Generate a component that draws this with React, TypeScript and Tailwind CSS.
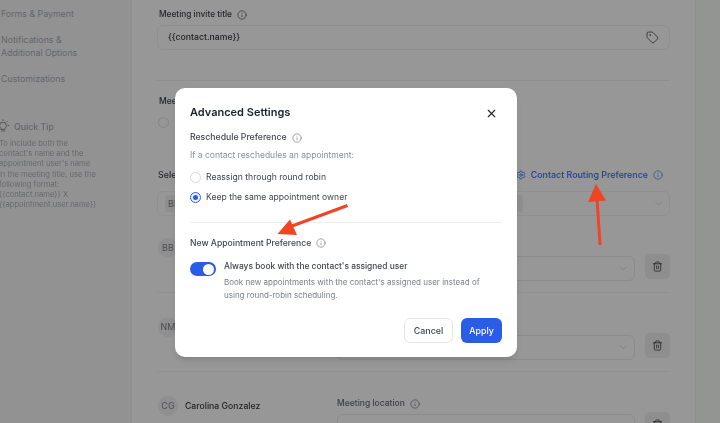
import React from "react";
import { Info, Tag, Settings, ChevronDown, Trash2, X } from "lucide-react";

function Row({ initials, name, label }: { initials: string; name?: string; label?: string }) {
  return (
    <div className="h-[79px] flex border-b border-[#909090] pt-[24px] shrink-0">
      <div className="w-[180px] pl-[1px] flex items-start gap-[7px]">
        <div className="w-[20px] h-[20px] rounded-full bg-[#8f8f90] flex items-center justify-center text-[9px] text-[#4b4d52] shrink-0">
          {initials}
        </div>
        {name && <span className="text-[8.7px] leading-[21px] text-[#1e1f22] font-medium">{name}</span>}
      </div>
      <div className="flex-1 flex flex-col pt-[1px]">
        <div className="h-[13px] shrink-0 flex items-center gap-[5px] text-[8.5px] font-medium text-[#3d3f44]">
          {label}
          {label && <Info size={10} strokeWidth={1.5} />}
        </div>
        <div className="mt-[4px] h-[25px] shrink-0 flex items-center justify-end pr-[5px] border border-[#8b8b8b] rounded-[6px] w-[298px]">
          <ChevronDown size={11} className="text-[#797979]" strokeWidth={1.5} />
        </div>
      </div>
      <div className="w-[25px] h-[25px] mt-[16px] ml-[10px] rounded-[5px] bg-[#8e8e8e] flex items-center justify-center">
        <Trash2 size={11} strokeWidth={1.75} className="text-[#25262a]" />
      </div>
    </div>
  );
}

export default function App() {
  return (
    <div className="w-[720px] h-[423px] overflow-hidden bg-[#939393]">
      <div className="relative w-[720px] h-[423px] flex blur-[0.4px] font-['Inter','Liberation_Sans',sans-serif]">
        {/* Sidebar */}
        <aside className="w-[132px] shrink-0 bg-[#929292] border-r border-[#8e8e8e] text-[#64666b] text-[8.8px] leading-[13px] pl-[1px] pt-[7px]">
          <p>Forms &amp; Payment</p>
          <p className="mt-[13px]">
            Notifications &amp;
            <br />
            Additional Options
          </p>
          <p className="mt-[13px]">Customizations</p>
          <div className="mt-[34px] -ml-[5px] flex items-center gap-[4px] text-[8.8px] font-medium">
            <svg width="14" height="14" viewBox="0 0 14 14" fill="none" stroke="#55575b" strokeWidth="1" strokeLinecap="round">
              <path d="M5 9.2C4 8.5 3.6 7.6 3.6 6.6a3.4 3.4 0 0 1 6.8 0c0 1-.4 1.9-1.4 2.6v1.2H5z" />
              <path d="M5.6 12h2.8" />
              <path d="M7 .6v1M1.2 6.6h1M11.8 6.6h1M2.8 2.4l.7.7M11.2 2.4l-.7.7" />
            </svg>
            <span>Quick Tip</span>
          </div>
          <p className="mt-[6px] -ml-[2px] text-[7.6px] leading-[10.2px] text-[#66686d] whitespace-nowrap">
            To include both the
            <br />
            contact's name and the
            <br />
            appointment user's name
            <br />
            in the meeting title, use the
            <br />
            following format:
            <br />
            {"{{contact.name}} X"}
            <br />
            {"{{appointment.user.name}}"}
          </p>
        </aside>

        {/* Main panel */}
        <main className="w-[564px] shrink-0 bg-[#979797] border-r border-[#8f8f8f] px-[25px] pt-[8px] flex flex-col">
          <div className="ml-[2px] h-[13px] shrink-0 flex items-center gap-[5px] text-[8.3px] font-medium text-[#26272b]">
            Meeting invite title <Info size={10} strokeWidth={1.5} />
          </div>
          <div className="mt-[4px] h-[25px] shrink-0 border border-[#8f8f8f] rounded-[6px] flex items-center justify-between pl-[10px] pr-[10px] text-[8.7px] text-[#1e1f22] font-medium">
            {"{{contact.name}}"}
            <Tag size={13} strokeWidth={1.5} className="text-[#2a2b2f]" />
          </div>
          <div className="mt-[30px] shrink-0 border-t border-[#8f8f8f]" />
          <div className="mt-[14px] ml-[2px] h-[13px] shrink-0 text-[8.5px] font-medium text-[#26272b]">Meeting</div>
          <div className="mt-[9px] ml-[1px] w-[11px] h-[11px] shrink-0 rounded-full border border-[#858585]" />
          <div className="mt-[40px] h-[14px] shrink-0 flex items-center justify-between text-[8.9px] font-medium">
            <span className="text-[#26272b] ml-[1px]">Select</span>
            <span className="flex items-center gap-[5px] text-[#1f3d9c] pr-[7px]">
              <Settings size={10} strokeWidth={1.75} />
              <span>Contact Routing Preference</span>
              <Info size={10} strokeWidth={1.5} />
            </span>
          </div>
          <div className="mt-[9px] h-[25px] shrink-0 border border-[#8f8f8f] rounded-[6px] flex items-center justify-between pl-[7px] pr-[5px]">
            <span className="h-[17px] w-[358px] bg-[#8f8f8f] rounded-[3px] text-[9px] pl-[3px] text-[#4b4d52] flex items-center">
              BB
            </span>
            <ChevronDown size={11} className="text-[#797979]" strokeWidth={1.5} />
          </div>
          <div className="mt-[-2px] shrink-0 flex flex-col">
            <Row initials="BB" />
            <Row initials="NM" />
            <Row initials="CG" name="Carolina Gonzalez" label="Meeting location" />
          </div>
        </main>

        {/* Right strip */}
        <div className="flex-1 bg-[#939593]" />

        {/* Modal */}
        <div className="absolute left-[175px] top-[88px] w-[342px] h-[269px] bg-white rounded-[10px] shadow-md px-[15px] pt-[16px] flex flex-col text-[#40444d]">
          <div className="flex items-center justify-between h-[16px] shrink-0">
            <h2 className="text-[11px] leading-[16px] font-semibold text-[#1a1f2b]">Advanced Settings</h2>
            <X size={13} strokeWidth={2} className="text-[#1f2430] mr-[4px] mt-[2px]" />
          </div>
          <div className="mt-[11px] h-[14px] shrink-0 flex items-center gap-[5px] text-[8.7px] font-medium">
            Reschedule Preference <Info size={10} strokeWidth={1.5} className="text-[#676b75]" />
          </div>
          <p className="mt-[4px] text-[8.5px] leading-[13px] text-[#8a8f9c]">If a contact reschedules an appointment:</p>
          <div className="mt-[8px] h-[14px] shrink-0 flex items-center gap-[5px] text-[8.6px]">
            <span className="w-[11px] h-[11px] rounded-full border border-[#d5d7dc]" />
            Reassign through round robin
          </div>
          <div className="mt-[6px] h-[14px] shrink-0 flex items-center gap-[5px] text-[8.6px]">
            <span className="w-[11px] h-[11px] rounded-full border border-[#2b5ce6] bg-[#eef2fe] flex items-center justify-center">
              <span className="w-[5px] h-[5px] rounded-full bg-[#2b5ce6]" />
            </span>
            Keep the same appointment owner
          </div>
          <div className="mt-[18px] shrink-0 border-t border-[#eceef1]" />
          <div className="mt-[13px] h-[14px] shrink-0 flex items-center gap-[5px] text-[8.6px] font-medium">
            New Appointment Preference <Info size={10} strokeWidth={1.5} className="text-[#676b75]" />
          </div>
          <div className="mt-[10px] flex gap-[8px] shrink-0">
            <div className="mt-[2px] w-[26px] h-[14px] rounded-full bg-[#2b5ce6] flex items-center justify-end pr-[2px] shrink-0">
              <span className="w-[11px] h-[11px] rounded-full bg-white" />
            </div>
            <div>
              <p className="text-[8.4px] leading-[13px] font-medium">Always book with the contact's assigned user</p>
              <p className="mt-[3px] text-[8px] leading-[13px] text-[#787d8a]">
                Book new appointments with the contact's assigned user instead of
                <br />
                using round-robin scheduling.
              </p>
            </div>
          </div>
          <div className="mt-[16px] flex justify-end gap-[8px] shrink-0">
            <button className="w-[49px] h-[25px] rounded-[6px] border border-[#e4e6ea] bg-white text-[8.9px] font-medium text-[#40444d]">
              Cancel
            </button>
            <button className="w-[41px] h-[25px] rounded-[6px] bg-[#2b5ce6] text-[8.9px] font-medium text-white">
              Apply
            </button>
          </div>
        </div>

        {/* Annotation arrows */}
        <svg className="absolute inset-0 pointer-events-none" width="720" height="423" viewBox="0 0 720 423">
          <line x1="347.5" y1="205.5" x2="292" y2="226" stroke="#ef4426" strokeWidth="3" />
          <polygon points="277.5,234 290,219.5 297,235" fill="#ef4426" />
          <line x1="600" y1="245" x2="597" y2="198" stroke="#ef4426" strokeWidth="3" />
          <polygon points="596,184 606,200.5 588,202" fill="#ef4426" />
        </svg>
      </div>
    </div>
  );
}
